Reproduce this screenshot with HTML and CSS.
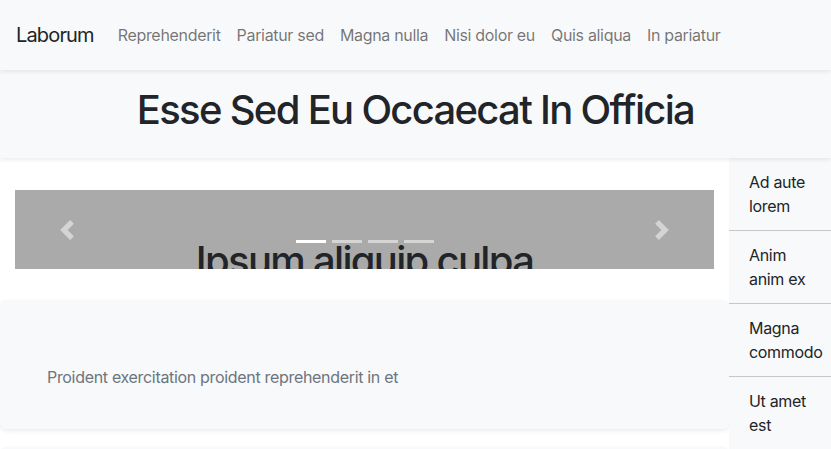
FILE: index.html
```
<!DOCTYPE html>
<html lang="en">
<head>
<meta charset="utf-8">
<title>Laborum</title>
<link rel="stylesheet" href="styles.css">
</head>
<body>
<nav class="navbar">
  <a class="brand" href="#">Laborum</a>
  <ul class="nav-links">
    <li><a href="#">Reprehenderit</a></li>
    <li><a href="#">Pariatur sed</a></li>
    <li><a href="#">Magna nulla</a></li>
    <li><a href="#">Nisi dolor eu</a></li>
    <li><a href="#">Quis aliqua</a></li>
    <li><a href="#">In pariatur</a></li>
  </ul>
</nav>
<header class="hero">
  <h1>Esse Sed Eu Occaecat In Officia</h1>
</header>
<div class="layout">
  <main class="main">
    <section class="carousel-wrap">
      <div class="carousel">
        <a class="control prev" href="#"><svg width="20" height="20" viewBox="0 0 8 8"><path d="M5.25 0l-4 4 4 4 1.5-1.5L4.25 4l2.5-2.5L5.25 0z" fill="#fff"/></svg></a>
        <div class="inner">
          <ol class="indicators">
            <li class="active"></li><li></li><li></li><li></li>
          </ol>
          <h2 class="caption">Ipsum aliquip culpa</h2>
        </div>
        <a class="control next" href="#"><svg width="20" height="20" viewBox="0 0 8 8"><path d="M2.75 0l-1.5 1.5L3.75 4l-2.5 2.5L2.75 8l4-4-4-4z" fill="#fff"/></svg></a>
      </div>
    </section>
    <section class="card">
      <p>Proident exercitation proident reprehenderit in et</p>
    </section>
    <section class="card next-card"></section>
  </main>
  <aside class="sidebar">
    <ul>
      <li>Ad aute lorem</li>
      <li>Anim anim ex</li>
      <li>Magna commodo</li>
      <li>Ut amet est</li>
    </ul>
  </aside>
</div>
</body>
</html>
```
FILE: styles.css
```
* { box-sizing: border-box; }
html, body { margin: 0; padding: 0; }
body {
  font-family: Inter, "Liberation Sans", sans-serif;
  font-size: 16px;
  line-height: 1.5;
  letter-spacing: -0.32px;
  color: #212529;
  background: #fff;
  overflow: hidden;
}
a { text-decoration: none; }

.navbar {
  height: 70px;
  display: flex;
  align-items: center;
  padding: 0 16px;
  background: #f8f9fa;
  box-shadow: 0 2px 4px rgba(0,0,0,.075);
  position: relative;
  z-index: 3;
}
.brand {
  font-size: 20px;
  letter-spacing: -0.85px;
  color: #212529;
  margin-right: 16px;
}
.nav-links {
  display: flex;
  list-style: none;
  margin: 0;
  padding: 0;
}
.nav-links a {
  display: block;
  padding: 8px;
  color: rgba(0,0,0,.55);
}

.hero {
  background: #f8f9fa;
  padding: 16px 0;
  text-align: center;
  box-shadow: 0 2px 4px rgba(0,0,0,.075);
  position: relative;
  z-index: 2;
}
.hero h1 {
  margin: 0 0 8px;
  font-size: 40px;
  font-weight: 500;
  line-height: 1.2;
  letter-spacing: -1.7px;
}

.layout {
  display: flex;
  align-items: flex-start;
}
.main {
  flex: 1;
  min-width: 0;
}
.carousel-wrap {
  padding: 32px 15px 31px;
}
.carousel {
  position: relative;
  height: 79px;
  overflow: hidden;
  background: #aaa;
  display: flex;
}
.control {
  width: 15%;
  display: flex;
  align-items: center;
  justify-content: center;
  opacity: .5;
}
.inner {
  flex: 1;
  text-align: center;
  position: relative;
}
.indicators {
  position: absolute;
  top: 50px;
  left: 0;
  right: 0;
  display: flex;
  justify-content: center;
  gap: 6px;
  list-style: none;
  margin: 0;
  padding: 0;
  z-index: 1;
}
.indicators li {
  width: 30px;
  height: 3px;
  background: #fff;
  opacity: .5;
}
.indicators li.active { opacity: 1; }
.caption {
  margin: 0;
  padding-top: 47px;
  font-size: 40px;
  font-weight: 500;
  line-height: 1.2;
  letter-spacing: -1.7px;
  color: #212529;
  white-space: nowrap;
}

.card {
  background: #f8f9fa;
  border-radius: 6px;
  box-shadow: 0 2px 4px rgba(0,0,0,.075);
  padding: 65px 47px 40px;
  height: 129px;
}
.card p {
  margin: 0;
  color: #6c757d;
}
.next-card {
  margin-top: 18px;
}

.sidebar {
  width: 102px;
  background: #f8f9fa;
  flex-shrink: 0;
}
.sidebar ul {
  list-style: none;
  margin: 0;
  padding: 0;
}
.sidebar li {
  padding: 12px 20px;
  border-bottom: 1px solid #c6c7c8;
}
```
